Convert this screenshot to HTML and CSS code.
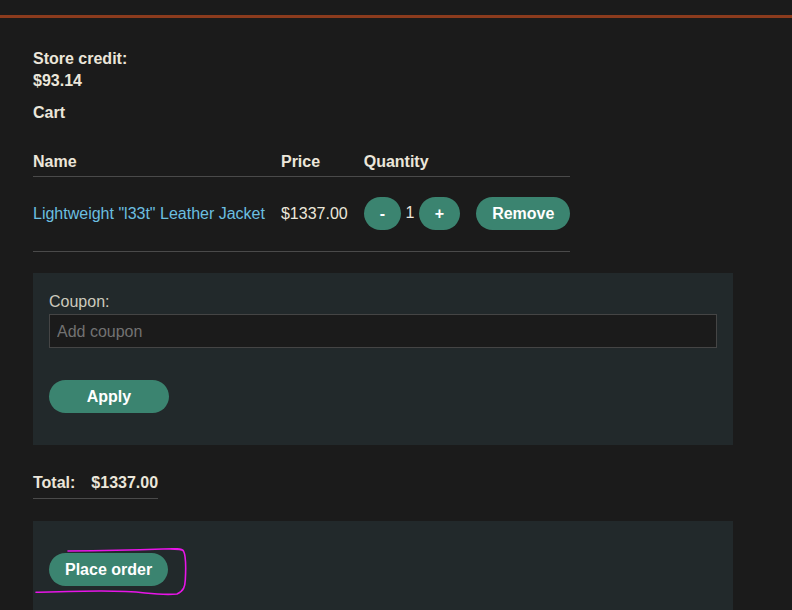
FILE: index.html
```html
<!DOCTYPE html>
<html lang="en">
  <head>
    <meta charset="UTF-8" />
    <meta name="viewport" content="width=device-width, initial-scale=1.0" />
    <title>Cart</title>
    <link rel="stylesheet" href="styles.css">
  </head>
  <body>
    <div class="top-bar"></div>

    <div class="container">
      <p class="credit">Store credit:<br />$93.14</p>
      <p class="cart-title">Cart</p>

      <table class="cart-table">
        <thead>
          <tr>
            <th>Name</th>
            <th>Price</th>
            <th>Quantity</th>
            <th></th>
          </tr>
        </thead>
        <tbody>
          <tr>
            <td><a href="#">Lightweight "l33t" Leather Jacket</a></td>
            <td>$1337.00</td>
            <td><button class="btn">-</button> 1 <button class="btn">+</button></td>
            <td><button class="btn">Remove</button></td>
          </tr>
        </tbody>
      </table>

      <form class="panel coupon-form">
        <label for="coupon">Coupon:</label>
        <input type="text" id="coupon" placeholder="Add coupon" />
        <button class="btn btn-wide" type="button">Apply</button>
      </form>

      <table class="total-table">
        <tr>
          <th>Total:</th>
          <th>$1337.00</th>
        </tr>
      </table>

      <form class="panel checkout-form">
        <div class="marked">
          <button class="btn" type="button">Place order</button>
          <!-- pen scribble around the checkout button -->
          <svg class="scribble" width="160" height="56" viewBox="0 0 160 56">
            <path
              d="M33 3 C60 2.8 100 2 128 1 C140 0.6 147 0.5 148.5 3 C151 8 151 20 150.3 32 C150 38 149 43 142 46 C130 47 120 46 110 45 C85 42 50 43 1 44.3"
              fill="none"
              stroke="#e815e8"
              stroke-width="1.6"
              stroke-linecap="round"
            />
          </svg>
        </div>
      </form>
    </div>
  </body>
</html>
```

FILE: styles.css
```css
/* 기본 */
* {
  margin: 0;
  padding: 0;
  box-sizing: border-box;
}

body {
  font-family: "Liberation Sans", Arial, sans-serif;
  font-size: 16px;
  line-height: 22px;
  color: #ebe6da;
  background-color: #1b1b1b;
}

.top-bar {
  height: 18px;
  border-bottom: 3px solid #8c3b1d;
}

.container {
  padding: 30px 33px 0;
}

.credit,
.cart-title {
  font-weight: bold;
}

.cart-title {
  margin-top: 10px;
}

/* 장바구니 표 */
.cart-table {
  border-collapse: collapse;
  margin-top: 23px;
}

.cart-table th {
  text-align: left;
  padding: 4px 16px 3px 0;
  border-bottom: 1px solid #4a4a4a;
}

.cart-table td {
  padding: 20px 16px 21px 0;
  border-bottom: 1px solid #4a4a4a;
  white-space: nowrap;
}

.cart-table th:last-child,
.cart-table td:last-child {
  padding-right: 0;
}

.cart-table a {
  color: #6bbfe0;
  text-decoration: none;
}

.btn {
  font-family: inherit;
  font-size: 16px;
  font-weight: bold;
  line-height: 22px;
  color: #fff;
  background: #3b8470;
  border: none;
  border-radius: 17px;
  padding: 6px 16px 5px;
  vertical-align: middle;
  cursor: pointer;
}

.btn-wide {
  width: 120px;
}

/* 쿠폰 / 주문 패널 */
.panel {
  width: 700px;
  background: #22292b;
  padding: 18px 16px 32px;
}

.coupon-form {
  margin-top: 21px;
  display: flex;
  flex-direction: column;
  align-items: flex-start;
}

.coupon-form label {
  color: #cdc9bd;
}

.coupon-form input {
  width: 100%;
  height: 34px;
  margin: 1px 0 32px;
  padding: 2px 7px 0;
  font-family: inherit;
  font-size: 16px;
  color: #ebe6da;
  background: #1b1b1b;
  border: 1px solid #454545;
}

.coupon-form input::placeholder {
  color: #727272;
}

.total-table {
  margin-top: 27px;
  border-collapse: collapse;
}

.total-table th {
  text-align: left;
  padding: 0 16px 4px 0;
  border-bottom: 1px solid #4a4a4a;
}

.total-table th:last-child {
  padding-right: 0;
}

.checkout-form {
  margin-top: 22px;
  padding-top: 32px;
  min-height: 100px;
}

.marked {
  position: relative;
  display: inline-block;
}

.scribble {
  position: absolute;
  left: -14px;
  top: -5px;
  pointer-events: none;
}
```
